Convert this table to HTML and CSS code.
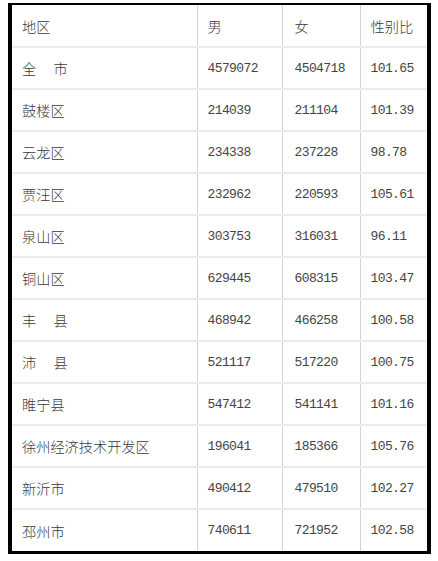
FILE: index.html
```html
<!DOCTYPE html>
<html lang="zh">
<head>
<meta charset="utf-8">
<link rel="stylesheet" href="styles.css">
</head>
<body>
<div class="frame">
<table class="stats">
<colgroup>
<col class="c1"><col class="c2"><col class="c3"><col class="c4">
</colgroup>
<tbody>
<tr><td class="name">地区</td><td class="name">男</td><td class="name p3">女</td><td class="name">性别比</td></tr>
<tr><td class="name">全<span class="sp">　 </span>市</td><td>4579072</td><td class="p3">4504718</td><td>101.65</td></tr>
<tr><td class="name">鼓楼区</td><td>214039</td><td class="p3">211104</td><td>101.39</td></tr>
<tr><td class="name">云龙区</td><td>234338</td><td class="p3">237228</td><td>98.78</td></tr>
<tr><td class="name">贾汪区</td><td>232962</td><td class="p3">220593</td><td>105.61</td></tr>
<tr><td class="name">泉山区</td><td>303753</td><td class="p3">316031</td><td>96.11</td></tr>
<tr><td class="name">铜山区</td><td>629445</td><td class="p3">608315</td><td>103.47</td></tr>
<tr><td class="name">丰<span class="sp">　 </span>县</td><td>468942</td><td class="p3">466258</td><td>100.58</td></tr>
<tr><td class="name">沛<span class="sp">　 </span>县</td><td>521117</td><td class="p3">517220</td><td>100.75</td></tr>
<tr><td class="name">睢宁县</td><td>547412</td><td class="p3">541141</td><td>101.16</td></tr>
<tr><td class="name">徐州经济技术开发区</td><td>196041</td><td class="p3">185366</td><td>105.76</td></tr>
<tr><td class="name">新沂市</td><td>490412</td><td class="p3">479510</td><td>102.27</td></tr>
<tr><td class="name">邳州市</td><td>740611</td><td class="p3">721952</td><td>102.58</td></tr>
</tbody>
</table>
</div>
</body>
</html>
```
FILE: styles.css
```css
html, body {
  margin: 0;
  background: #ffffff;
}
body {
  padding: 3px 7px 0 8px;
}
.frame {
  width: 415px;
  border-style: solid;
  border-color: #000;
  border-width: 2px 4px 3px 4px;
  background: #fff;
}
.stats {
  width: 415px;
  table-layout: fixed;
  border-collapse: collapse;
  font-family: "Liberation Mono", "DejaVu Sans Mono", monospace;
  font-size: 13px;
  letter-spacing: -0.6px;
  color: #444;
}
.c1 { width: 185px; }
.c2 { width: 85px; }
.c3 { width: 78px; }
.c4 { width: 67px; }
.stats td {
  height: 42px;
  padding: 0 0 0 10px;
  border-right: 1px solid #d3d3d3;
  border-bottom: 2px solid #ebebeb;
  vertical-align: middle;
  white-space: nowrap;
  box-sizing: border-box;
}
.stats tr td:last-child { border-right: none; }
.stats tr:last-child td { border-bottom: none; height: 42px; }
.stats td.p3 { padding-left: 12px; }
.stats td.name {
  font-family: "Noto Sans CJK SC", "Noto Sans", sans-serif;
  font-size: 14.2px;
  letter-spacing: 0;
  font-weight: 300;
  color: #3a3a3a;
}
.sp { letter-spacing: 0; }
```
